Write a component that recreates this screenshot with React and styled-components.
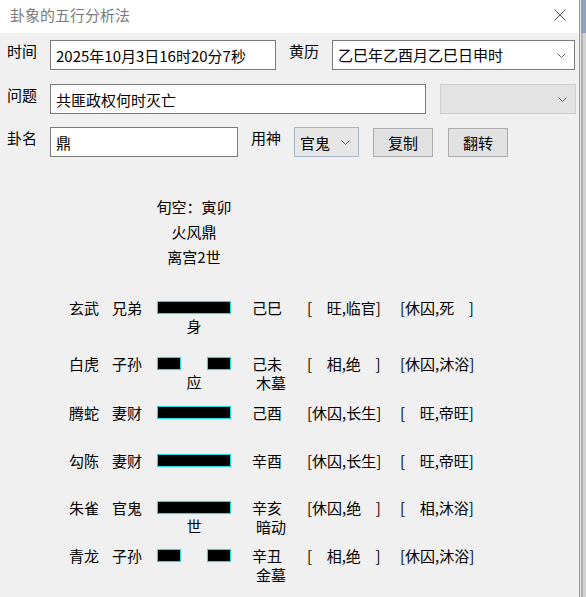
import React from "react";
import styled, { createGlobalStyle } from "styled-components";

const GlobalStyle = createGlobalStyle`
    html, body {
        margin: 0;
        padding: 0;
        background: #f0f0f0;
    }
    body {
        font-family: "Noto Sans CJK SC", "Noto Sans", sans-serif;
        font-size: 15px;
        color: #000;
    }
`;

const yaoList = [
    { god: '玄武', rel: '兄弟', yang: true, mark: '身', gz: '己巳', a: '[   旺,临官]', b: '[休囚,死   ]', pitch: 56 },
    { god: '白虎', rel: '子孙', yang: false, mark: '应', gz: '己未', gzSub: '木墓', a: '[   相,绝   ]', b: '[休囚,沐浴]', pitch: 49 },
    { god: '腾蛇', rel: '妻财', yang: true, gz: '己酉', a: '[休囚,长生]', b: '[   旺,帝旺]', pitch: 48 },
    { god: '勾陈', rel: '妻财', yang: true, gz: '辛酉', a: '[休囚,长生]', b: '[   旺,帝旺]', pitch: 47 },
    { god: '朱雀', rel: '官鬼', yang: true, mark: '世', gz: '辛亥', gzSub: '暗动', a: '[休囚,绝   ]', b: '[   相,沐浴]', pitch: 48 },
    { god: '青龙', rel: '子孙', yang: false, gz: '辛丑', gzSub: '金墓', a: '[   相,绝   ]', b: '[休囚,沐浴]' },
];

const Chevron = () => (
    <svg width="9" height="5" viewBox="0 0 9 5">
        <polyline points="0.5,0.5 4.5,4.5 8.5,0.5" fill="none" stroke="#606060" strokeWidth="1" />
    </svg>
);

const CloseIcon = () => (
    <svg width="12" height="12" viewBox="0 0 12 12">
        <path d="M0.5 0.5 L11.5 11.5 M11.5 0.5 L0.5 11.5" stroke="#555" strokeWidth="1" />
    </svg>
);

const App = () => {
    return (
        <>
            <GlobalStyle />
            <Screen>
                <Window>
                    <TitleBar>
                        <Title>卦象的五行分析法</Title>
                        <CloseBtn><CloseIcon /></CloseBtn>
                    </TitleBar>
                    <Body>
                        <Form>
                            <FormRow>
                                <Label>时间</Label>
                                <TextBox w={226} readOnly value="2025年10月3日16时20分7秒" />
                                <Label $gap={13}>黄历</Label>
                                <Select w={243}>
                                    <span>乙巳年乙酉月乙巳日申时</span>
                                    <Chevron />
                                </Select>
                            </FormRow>
                            <FormRow $top={14}>
                                <Label>问题</Label>
                                <TextBox w={376} readOnly value="共匪政权何时灭亡" />
                                <Select w={136} $disabled $gap={14}>
                                    <span></span>
                                    <Chevron />
                                </Select>
                            </FormRow>
                            <FormRow $top={13}>
                                <Label>卦名</Label>
                                <TextBox w={188} readOnly value="鼎" />
                                <Label $gap={13}>用神</Label>
                                <Select w={65} $combo>
                                    <span>官鬼</span>
                                    <Chevron />
                                </Select>
                                <Button $gap={14}>复制</Button>
                                <Button $gap={15}>翻转</Button>
                            </FormRow>
                        </Form>

                        <InfoBlock>
                            <div>旬空：寅卯</div>
                            <div>火风鼎</div>
                            <div>离宫2世</div>
                        </InfoBlock>

                        <YaoList>
                            {yaoList.map((y, i) => (
                                <YaoRow key={i} pitch={y.pitch}>
                                    <Cell>{y.god}</Cell>
                                    <Cell>{y.rel}</Cell>
                                    <BarCell>
                                        <Line>
                                            {y.yang ? (
                                                <Bar w={74} />
                                            ) : (
                                                <>
                                                    <Bar w={24} />
                                                    <Bar w={24} />
                                                </>
                                            )}
                                        </Line>
                                        {y.mark && <Mark>{y.mark}</Mark>}
                                    </BarCell>
                                    <Cell>
                                        <div>{y.gz}</div>
                                        {y.gzSub && <SubText>{y.gzSub}</SubText>}
                                    </Cell>
                                    <Cell $pre>{y.a}</Cell>
                                    <Cell $pre>{y.b}</Cell>
                                </YaoRow>
                            ))}
                        </YaoList>
                    </Body>
                </Window>
                <Side>
                    <SideTop />
                    <SideRest />
                </Side>
            </Screen>
        </>
    );
};

const Screen = styled.div`
    display: flex;
    width: 586px;
    height: 597px;
    overflow: hidden;
`;
const Window = styled.div`
    width: 579px;
    border-right: 1px solid #9a9a9a;
    display: flex;
    flex-direction: column;
    background: #f0f0f0;
`;
const TitleBar = styled.div`
    height: 33px;
    background: #fff;
    display: flex;
    align-items: center;
    justify-content: space-between;
    padding: 0 13px 0 10px;
    flex-shrink: 0;
`;
const Title = styled.div`
    color: #7a7a7a;
    font-size: 15px;
    line-height: 20px;
    margin-top: -4px;
`;
const CloseBtn = styled.div`
    display: flex;
    margin-top: -3px;
`;
const Body = styled.div`
    flex: 1;
    display: flex;
    flex-direction: column;
`;
const Form = styled.div`
    padding: 7px 0 0 7px;
    display: flex;
    flex-direction: column;
`;
const FormRow = styled.div`
    display: flex;
    align-items: flex-start;
    height: 30px;
    margin-top: ${p => p.$top || 0}px;
`;
const Label = styled.div`
    width: 43px;
    margin-left: ${p => p.$gap || 0}px;
    line-height: 20px;
    margin-top: 1px;
    flex-shrink: 0;
`;
const TextBox = styled.input`
    box-sizing: border-box;
    width: ${p => p.w}px;
    height: 30px;
    border: 1px solid #7a7a7a;
    background: #fff;
    padding: 0 5px;
    margin: 0;
    font-family: inherit;
    font-size: 15px;
    color: #000;
    outline: none;
`;
const Select = styled.div`
    box-sizing: border-box;
    width: ${p => p.w}px;
    height: ${p => p.$combo ? 30 : 30}px;
    margin-left: ${p => p.$gap || 0}px;
    border: 1px solid ${p => p.$disabled ? '#cccccc' : p.$combo ? '#a7b7c9' : '#7a7a7a'};
    background: ${p => p.$disabled ? '#e3e3e3' : p.$combo ? '#e6e6e6' : '#fff'};
    display: flex;
    align-items: center;
    justify-content: space-between;
    padding: 0 8px 0 5px;
    line-height: 20px;
    flex-shrink: 0;
    span {
        white-space: nowrap;
        padding-top: ${p => p.$combo ? 2 : 0}px;
    }
`;
const Button = styled.div`
    box-sizing: border-box;
    width: 60px;
    height: 29px;
    margin-left: ${p => p.$gap || 0}px;
    margin-top: 1px;
    border: 1px solid #adadad;
    background: #e1e1e1;
    display: flex;
    align-items: center;
    justify-content: center;
    line-height: 20px;
    flex-shrink: 0;
`;
const InfoBlock = styled.div`
    margin: 37px 0 0 134px;
    width: 120px;
    text-align: center;
    line-height: 25px;
`;
const YaoList = styled.div`
    margin-top: 32px;
    padding-left: 69px;
    display: flex;
    flex-direction: column;
`;
const YaoRow = styled.div`
    display: grid;
    grid-template-columns: 43px 45px 95px 55px 93px auto;
    align-items: start;
    height: ${p => p.pitch ? `${p.pitch}px` : 'auto'};
`;
const Cell = styled.div`
    line-height: 13px;
    white-space: ${p => p.$pre ? 'pre' : 'normal'};
    word-spacing: 1.5px;
`;
const SubText = styled.div`
    line-height: 16px;
    margin-top: 5px;
    padding-left: 4px;
`;
const BarCell = styled.div`
    width: 74px;
    display: flex;
    flex-direction: column;
    align-items: center;
`;
const Line = styled.div`
    width: 74px;
    display: flex;
    justify-content: space-between;
`;
const Bar = styled.div`
    box-sizing: border-box;
    width: ${p => p.w}px;
    height: 13px;
    background: #000;
    border: 1px solid #22dede;
    box-shadow: 0 0 1px #7ff;
`;
const Mark = styled.div`
    line-height: 16px;
    margin-top: 4px;
`;
const Side = styled.div`
    flex: 1;
    display: flex;
    flex-direction: column;
`;
const SideTop = styled.div`
    height: 33px;
    background: linear-gradient(to right, #e6e6e6 0 1px, #8ea3bb 1px);
`;
const SideRest = styled.div`
    flex: 1;
    background: linear-gradient(to right, #e3e3e3 0 1px, #b2b2b2 1px 3px, #d2d2d2 3px);
`;

export default App;
